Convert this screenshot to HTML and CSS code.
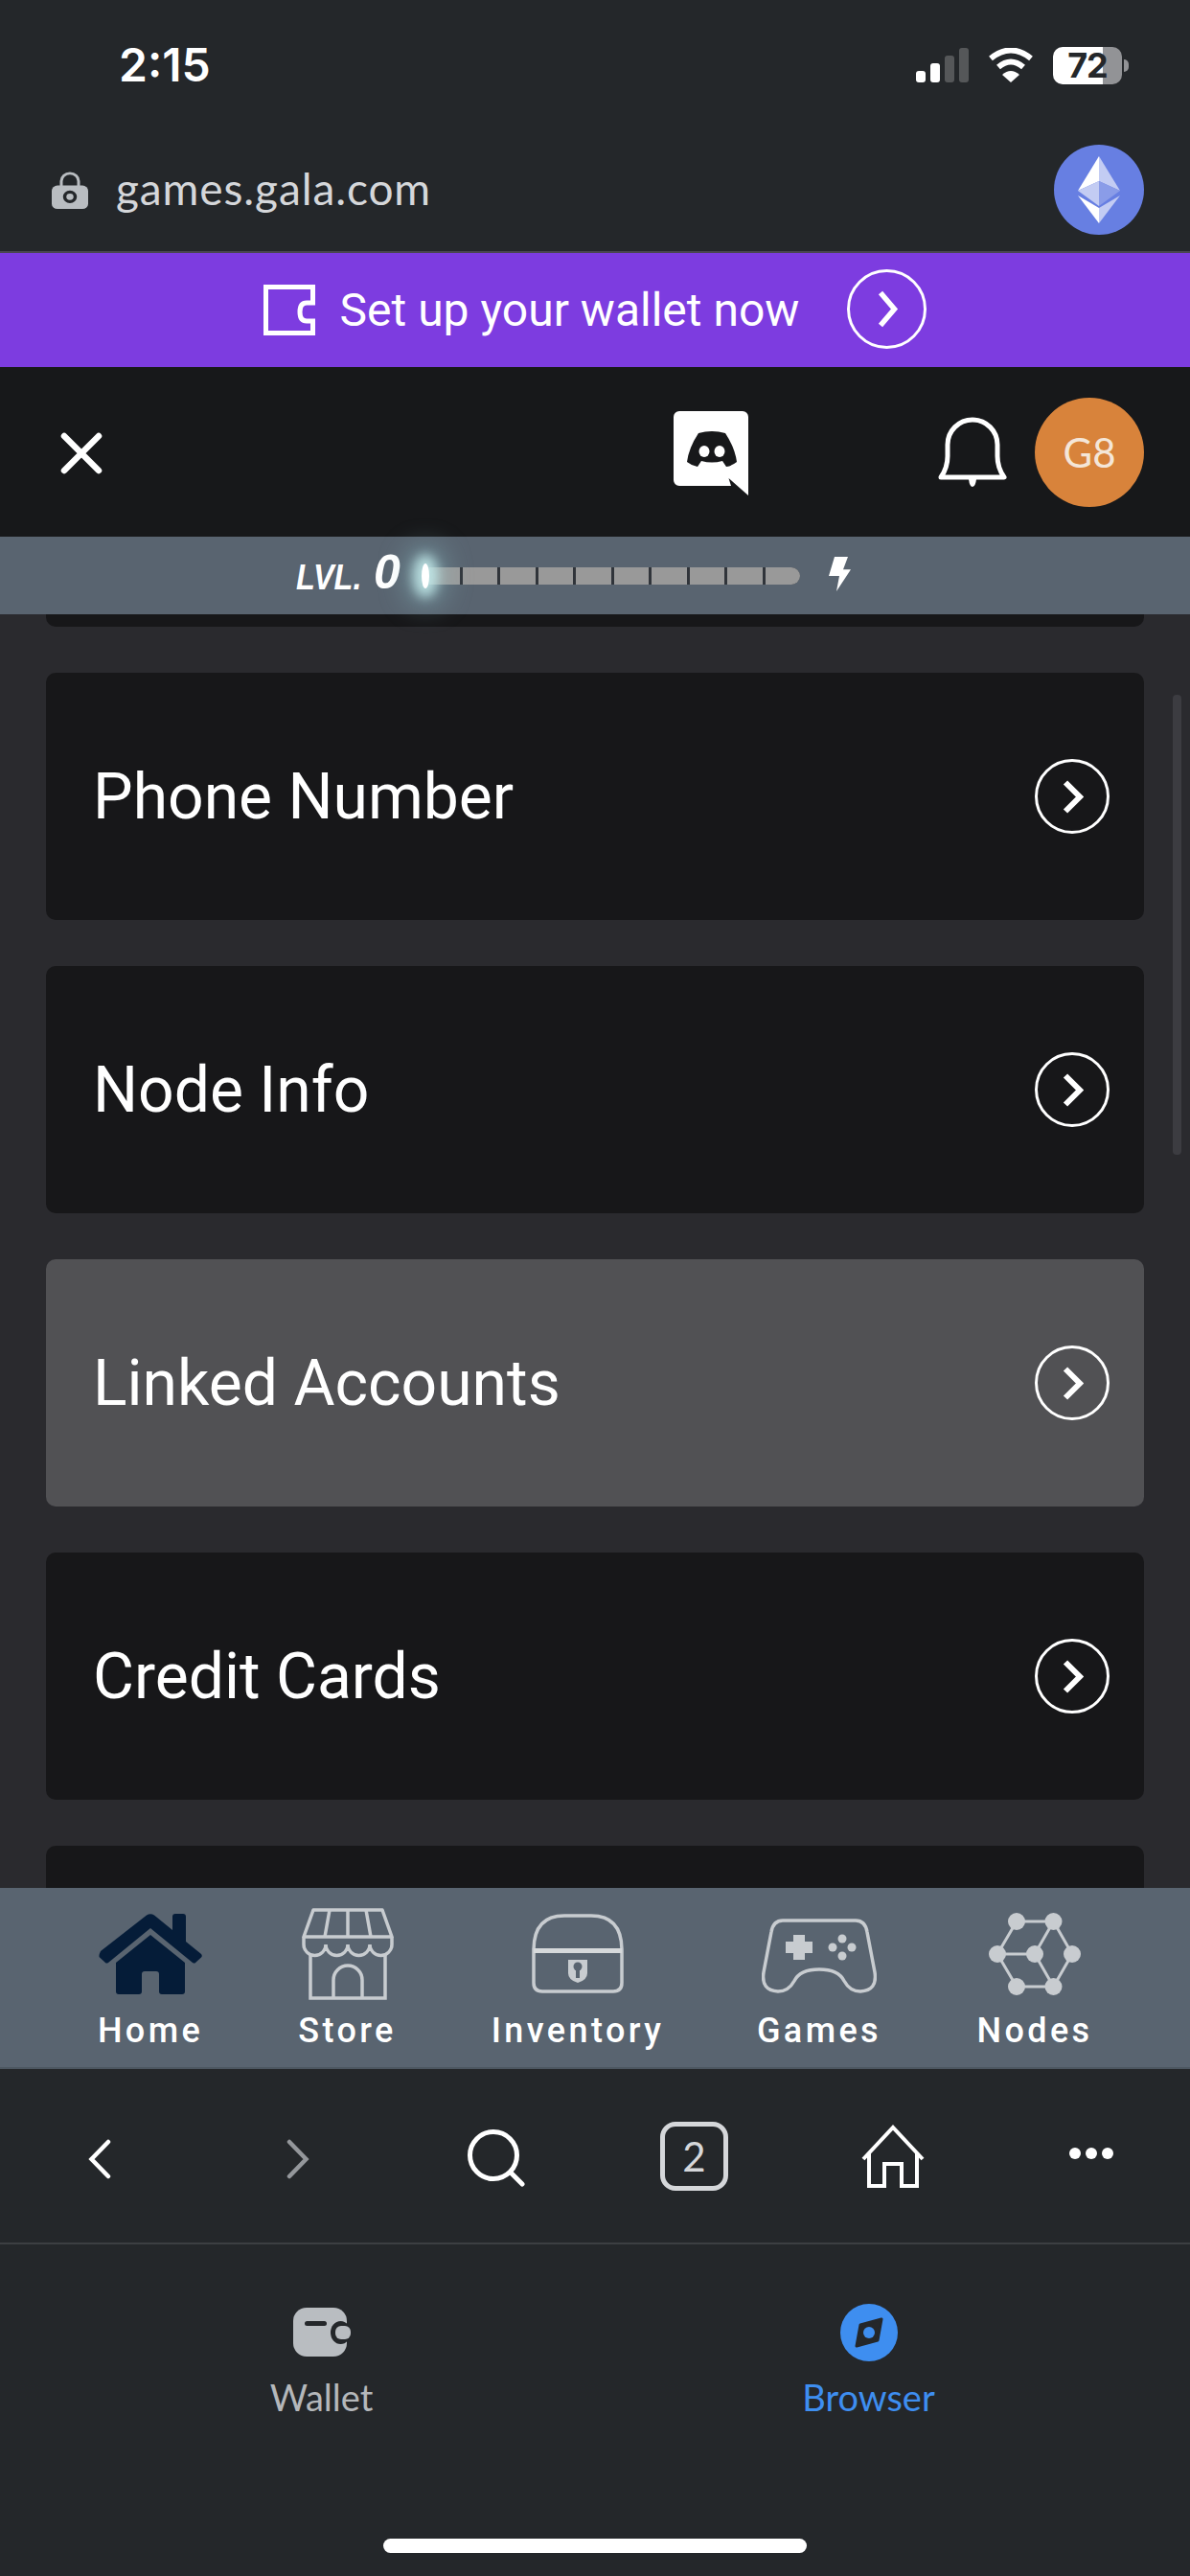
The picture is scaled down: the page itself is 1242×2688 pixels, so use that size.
FILE: index.html
```
<!DOCTYPE html>
<html lang="en">
<head>
    <meta charset="UTF-8">
    <meta name="viewport" content="width=device-width, initial-scale=1.0">
    <title>games.gala.com</title>
    <link rel="stylesheet" href="styles.css">
</head>
<body>
    <div class="screen">
        <!-- Status bar -->
        <div class="status-bar">
            <span class="clock">2:15</span>
            <div class="status-icons">
                <svg width="55" height="36" viewBox="0 0 55 36">
                    <rect x="0" y="24" width="10" height="12" rx="3" fill="#fff"/>
                    <rect x="15" y="16" width="10" height="20" rx="3" fill="#fff"/>
                    <rect x="30" y="8" width="10" height="28" rx="3" fill="#555759"/>
                    <rect x="45" y="0" width="10" height="36" rx="3" fill="#555759"/>
                </svg>
                <svg width="48" height="36" viewBox="0 0 48 36">
                    <path d="M3 11 Q24 -6 45 11" fill="none" stroke="#fff" stroke-width="6"/>
                    <path d="M11 20 Q24 9 37 20" fill="none" stroke="#fff" stroke-width="6"/>
                    <path d="M15 28 Q24 20 33 28 L24 36 Z" fill="#fff"/>
                </svg>
                <div class="battery">
                    <div class="battery-body"><span>72</span></div>
                    <div class="battery-tip"></div>
                </div>
            </div>
        </div>

        <!-- Address bar -->
        <div class="address-bar">
            <div class="address">
                <svg width="40" height="40" viewBox="0 0 40 44" preserveAspectRatio="none">
                    <path d="M11 18 V11 a9 9 0 0 1 18 0 V18" fill="none" stroke="#b9bdc1" stroke-width="3"/>
                    <rect x="1" y="16" width="38" height="27" rx="6" fill="#b9bdc1"/>
                    <circle cx="20" cy="29" r="5.5" fill="none" stroke="#24272a" stroke-width="3.5"/>
                </svg>
                <span class="url">games.gala.com</span>
            </div>
            <div class="eth-badge">
                <svg width="44" height="70" viewBox="0 0 44 70">
                    <path d="M22 0 L0 36 L22 26 Z" fill="#fff"/>
                    <path d="M22 0 L44 36 L22 26 Z" fill="#c3ccf3"/>
                    <path d="M22 26 L0 36 L22 52 Z" fill="#c3ccf3"/>
                    <path d="M22 26 L44 36 L22 52 Z" fill="#8a9ce8"/>
                    <path d="M0 41 L22 70 L22 54 Z" fill="#fff"/>
                    <path d="M44 41 L22 70 L22 54 Z" fill="#c3ccf3"/>
                </svg>
            </div>
        </div>

        <!-- Wallet banner -->
        <div class="wallet-banner">
            <svg class="banner-wallet" width="54" height="53" viewBox="0 0 54 53">
                <path d="M51.5 21 V2.5 H2.5 V50.5 H51.5 V36" fill="none" stroke="#fff" stroke-width="5"/>
                <path d="M54 19 H45 Q38 19 38 28.5 Q38 38 45 38 H54" fill="none" stroke="#fff" stroke-width="5"/>
            </svg>
            <span class="banner-text">Set up your wallet now</span>
            <span class="circle-arrow banner-arrow">
                <svg width="24" height="39" viewBox="0 0 24 39"><path d="M4 2.5 L18.5 19.5 L4 36.5" fill="none" stroke="#fff" stroke-width="5.5"/></svg>
            </span>
        </div>

        <!-- Site header -->
        <div class="site-header">
            <svg class="close-icon" width="44" height="44" viewBox="0 0 44 44">
                <path d="M4 4 L40 40 M40 4 L4 40" stroke="#fff" stroke-width="6.5" stroke-linecap="round"/>
            </svg>
            <div class="header-right">
                <svg class="discord" width="78" height="88" viewBox="0 0 78 88">
                    <path d="M6 0 H72 a6 6 0 0 1 6 6 V88 L57.5 70 L60 78 H6 a6 6 0 0 1 -6 -6 V6 a6 6 0 0 1 6 -6 Z" fill="#fff"/>
                    <path d="M26 23 Q40 19 54 23 Q64 38 66 53 Q61 57 55 58 L51 52 Q40 55 29 52 L25 58 Q19 57 14 53 Q16 38 26 23 Z" fill="#17181a"/>
                    <ellipse cx="32" cy="42" rx="5.5" ry="6" fill="#fff"/>
                    <ellipse cx="48" cy="42" rx="5.5" ry="6" fill="#fff"/>
                </svg>
                <svg class="bell" width="72" height="74" viewBox="0 0 72 74">
                    <path d="M3 63 Q10 53 10 41 V29 a26 26 0 0 1 52 0 V41 Q62 53 69 63 Z" fill="none" stroke="#fff" stroke-width="5" stroke-linejoin="round"/>
                    <path d="M32 65 Q33 73 36 73 Q39 73 40 65" fill="#fff"/>
                </svg>
                <div class="avatar">G8</div>
            </div>
        </div>

        <!-- Level bar -->
        <div class="level-bar">
            <span class="lvl-label">LVL.</span>
            <span class="lvl-num">0</span>
            <div class="xp-track">
                <span class="xp-seg"></span><span class="xp-seg"></span><span class="xp-seg"></span>
                <span class="xp-seg"></span><span class="xp-seg"></span><span class="xp-seg"></span>
                <span class="xp-seg"></span><span class="xp-seg"></span><span class="xp-seg"></span>
                <span class="xp-seg"></span>
                <div class="xp-glow"></div>
            </div>
            <svg class="bolt" width="24" height="36" viewBox="0 0 24 38" preserveAspectRatio="none">
                <path d="M7 0 H21 L16 14 H24 L9 38 L12 21 H1 Z" fill="#fff"/>
            </svg>
        </div>

        <!-- Scrolling settings list -->
        <div class="content">
            <div class="card card-cut"></div>
            <div class="card">
                <span>Phone Number</span>
                <span class="circle-arrow"><svg width="22" height="35" viewBox="0 0 22 35"><path d="M3 2.5 L18 17.5 L3 32.5" fill="none" stroke="#fff" stroke-width="6"/></svg></span>
            </div>
            <div class="card">
                <span>Node Info</span>
                <span class="circle-arrow"><svg width="22" height="35" viewBox="0 0 22 35"><path d="M3 2.5 L18 17.5 L3 32.5" fill="none" stroke="#fff" stroke-width="6"/></svg></span>
            </div>
            <div class="card card-active">
                <span>Linked Accounts</span>
                <span class="circle-arrow"><svg width="22" height="35" viewBox="0 0 22 35"><path d="M3 2.5 L18 17.5 L3 32.5" fill="none" stroke="#fff" stroke-width="6"/></svg></span>
            </div>
            <div class="card">
                <span>Credit Cards</span>
                <span class="circle-arrow"><svg width="22" height="35" viewBox="0 0 22 35"><path d="M3 2.5 L18 17.5 L3 32.5" fill="none" stroke="#fff" stroke-width="6"/></svg></span>
            </div>
            <div class="card"></div>
            <div class="scrollbar"></div>
        </div>

        <!-- Site bottom nav -->
        <div class="site-nav">
            <div class="nav-item">
                <svg width="108" height="84" viewBox="0 0 108 84">
                    <path d="M2 39 L50 1.5 Q54 -1 58 1.5 L77 17 V3 Q77 0 80 0 H88 Q91 0 91 3 V29 L107 42 Q108.5 44 107 45.5 L101 51 Q100 52 98 51 L54 15 L10 51 Q8 52 7 51 L1 45.5 Q-0.5 44 2 39 Z" fill="#051c38"/>
                    <path d="M54 22 L90 51 V81 Q90 84 87 84 H66 Q63 84 63 81 V63 Q63 60 60 60 H48 Q45 60 45 63 V81 Q45 84 42 84 H21 Q18 84 18 81 V51 Z" fill="#051c38"/>
                </svg>
                <span class="nav-label">Home</span>
            </div>
            <div class="nav-item">
                <svg width="96" height="96" viewBox="0 0 96 96">
                    <path d="M9 49 V94 H87 V49" fill="none" stroke="#c8ccd0" stroke-width="3.5"/>
                    <path d="M12 2 H84 L94 30 H2 Z" fill="none" stroke="#c8ccd0" stroke-width="3.5" stroke-linejoin="round"/>
                    <path d="M29 2 L24 30 M48 2 V30 M67 2 L72 30" stroke="#c8ccd0" stroke-width="3.5"/>
                    <path d="M2 30 V38 a11.5 11.5 0 0 0 23 0 a11.5 11.5 0 0 0 23 0 a11.5 11.5 0 0 0 23 0 a11.5 11.5 0 0 0 23 0 V30" fill="none" stroke="#c8ccd0" stroke-width="3.5"/>
                    <path d="M33 94 V75 a15 15 0 0 1 30 0 V94" fill="none" stroke="#c8ccd0" stroke-width="3.5"/>
                </svg>
                <span class="nav-label">Store</span>
            </div>
            <div class="nav-item">
                <svg width="96" height="84" viewBox="0 0 96 84">
                    <path d="M2 38 Q2 2 34 2 H62 Q94 2 94 38 V72 Q94 81 85 81 H11 Q2 81 2 72 Z" fill="none" stroke="#c8ccd0" stroke-width="3.5"/>
                    <rect x="2" y="36" width="92" height="5" fill="#d6d9db"/>
                    <path d="M38 48 H58 V62 Q58 69 48 72 Q38 69 38 62 Z" fill="#c8ccd0"/>
                    <circle cx="48" cy="55" r="4.5" fill="#596470"/>
                    <rect x="46" y="56" width="4" height="11" fill="#596470"/>
                </svg>
                <span class="nav-label">Inventory</span>
            </div>
            <div class="nav-item">
                <svg class="games-icon" width="120" height="78" viewBox="0 0 120 78">
                    <path d="M22 2 H98 Q108 2 110 14 L118 56 Q121 75 103 76 Q92 76 86 65 Q80 53 60 53 Q40 53 34 65 Q28 76 17 76 Q-1 75 2 56 L10 14 Q12 2 22 2 Z" fill="none" stroke="#c8ccd0" stroke-width="3.5"/>
                    <path d="M33 17 H45 V24 H53 V36 H45 V43 H33 V36 H25 V24 H33 Z" fill="#c8ccd0"/>
                    <circle cx="84" cy="21" r="4.5" fill="#c8ccd0"/>
                    <circle cx="74" cy="30" r="4.5" fill="#c8ccd0"/>
                    <circle cx="94" cy="30" r="4.5" fill="#c8ccd0"/>
                    <circle cx="84" cy="39" r="4.5" fill="#c8ccd0"/>
                </svg>
                <span class="nav-label">Games</span>
            </div>
            <div class="nav-item">
                <svg width="96" height="86" viewBox="0 0 96 86">
                    <path d="M29 9 H67.5 M29 77 H67.5 M9 43 H48 M29 9 L9 43 L29 77 M67.5 9 L87 43 L67.5 77 M67.5 9 L48 43 L67.5 77" fill="none" stroke="#c8ccd0" stroke-width="3"/>
                    <circle cx="29" cy="9" r="9" fill="#c8ccd0"/>
                    <circle cx="67.5" cy="9" r="9" fill="#c8ccd0"/>
                    <circle cx="9" cy="43" r="9" fill="#c8ccd0"/>
                    <circle cx="48" cy="43" r="9" fill="#c8ccd0"/>
                    <circle cx="87" cy="43" r="9" fill="#c8ccd0"/>
                    <circle cx="29" cy="77" r="9" fill="#c8ccd0"/>
                    <circle cx="67.5" cy="77" r="9" fill="#c8ccd0"/>
                </svg>
                <span class="nav-label">Nodes</span>
            </div>
        </div>

        <!-- Browser toolbar -->
        <div class="browser-toolbar">
            <svg class="tool-chevron" width="24" height="42" viewBox="0 0 24 42"><path d="M21 3 L3.5 21 L21 39" fill="none" stroke="#fff" stroke-width="4.5" stroke-linecap="round"/></svg>
            <svg class="tool-chevron" width="24" height="42" viewBox="0 0 24 42"><path d="M3 3 L20.5 21 L3 39" fill="none" stroke="#94979b" stroke-width="4.5" stroke-linecap="round"/></svg>
            <svg class="tool-search" width="60" height="60" viewBox="0 0 60 60">
                <circle cx="27" cy="27" r="24.5" fill="none" stroke="#fff" stroke-width="5"/>
                <path d="M45 45 L57 57" stroke="#fff" stroke-width="5" stroke-linecap="round"/>
            </svg>
            <div class="tab-count">2</div>
            <svg width="66" height="66" viewBox="0 0 66 66">
                <path d="M2 36 L33 3 L64 36 M8 29 V64 H24 V41 H42 V64 H58 V29" fill="none" stroke="#fff" stroke-width="4"/>
            </svg>
            <div class="more-dots"><span></span><span></span><span></span></div>
        </div>

        <!-- Wallet tabs -->
        <div class="app-tabs">
            <div class="app-tab">
                <svg width="60" height="60" viewBox="0 0 60 60">
                    <rect x="0" y="4" width="56" height="51" rx="14" fill="#b9bdc1"/>
                    <rect x="39" y="18" width="21" height="24" rx="12" fill="#24272a"/>
                    <rect x="44" y="23" width="16" height="14" rx="6" fill="#b9bdc1"/>
                    <rect x="12" y="18" width="23" height="5" rx="2.5" fill="#24272a"/>
                </svg>
                <span>Wallet</span>
            </div>
            <div class="app-tab tab-active">
                <svg width="60" height="60" viewBox="0 0 60 60">
                    <circle cx="30" cy="30" r="30" fill="#3e8ef0"/>
                    <path d="M21 22 L43 16 L39 38 L17 44 Z" fill="#24272a" stroke="#24272a" stroke-width="3" stroke-linejoin="round"/>
                    <circle cx="30" cy="30" r="6" fill="#3e8ef0"/>
                </svg>
                <span>Browser</span>
            </div>
        </div>

        <div class="home-indicator"></div>
    </div>
</body>
</html>
```

FILE: styles.css
```
* {
    box-sizing: border-box;
}
body {
    margin: 0;
    background-color: #24272a;
    font-family: Roboto, sans-serif;
}
.screen {
    width: 1242px;
    height: 2688px;
    display: flex;
    flex-direction: column;
    overflow: hidden;
}
svg {
    display: block;
    flex-shrink: 0;
}

/* status bar */
.status-bar {
    height: 122px;
    padding: 46px 64px 0 124px;
    display: flex;
    justify-content: space-between;
    background-color: #24272a;
}
.clock {
    color: #fff;
    font-family: Inter, sans-serif;
    font-size: 48px;
    font-weight: 600;
    line-height: 44px;
}
.status-icons {
    height: 44px;
    display: flex;
    align-items: center;
    gap: 20px;
}
.battery {
    display: flex;
    align-items: center;
    gap: 2px;
}
.battery-body {
    width: 72px;
    height: 39px;
    border-radius: 10px;
    background: linear-gradient(90deg, #fff 72%, #929396 72%);
    display: flex;
    align-items: center;
    justify-content: center;
    color: #24272a;
    font-family: Inter, sans-serif;
    font-size: 36px;
    font-weight: 700;
    letter-spacing: -1px;
}
.battery-tip {
    width: 5px;
    height: 13px;
    border-radius: 0 5px 5px 0;
    background-color: #929396;
}

/* address bar */
.address-bar {
    height: 142px;
    flex-shrink: 0;
    padding: 0 48px 0 53px;
    display: flex;
    align-items: flex-start;
    justify-content: space-between;
    background-color: #24272a;
    border-bottom: 2px solid #4a4650;
}
.address {
    display: flex;
    align-items: center;
    gap: 28px;
    margin-top: 56px;
}
.url {
    color: #d5d7da;
    font-family: Lato, sans-serif;
    font-size: 46px;
    letter-spacing: 0.9px;
    line-height: 44px;
    margin-top: -3px;
}
.eth-badge {
    width: 94px;
    height: 94px;
    margin-top: 29px;
    border-radius: 50%;
    background-color: #677fe2;
    display: flex;
    align-items: center;
    justify-content: center;
}

/* banner */
.wallet-banner {
    height: 119px;
    flex-shrink: 0;
    background-color: #7d3ce0;
    display: flex;
    align-items: center;
    justify-content: center;
}
.banner-wallet {
    margin-right: 26px;
}
.banner-text {
    color: #fff;
    font-size: 48px;
    margin-right: 50px;
}
.circle-arrow {
    width: 78px;
    height: 78px;
    border: 3px solid #fff;
    border-radius: 50%;
    display: flex;
    align-items: center;
    justify-content: center;
    padding-left: 2px;
    flex-shrink: 0;
}
.banner-arrow {
    width: 83px;
    height: 83px;
    margin-top: -2px;
}

/* site header */
.site-header {
    height: 177px;
    flex-shrink: 0;
    padding: 0 48px 0 63px;
    display: flex;
    align-items: center;
    justify-content: space-between;
    background-color: #17181a;
}
.close-icon {
    margin-top: 3px;
}
.header-right {
    display: flex;
    align-items: center;
}
.discord {
    margin-right: 198px;
    margin-top: 3px;
}
.bell {
    margin-right: 29px;
}
.avatar {
    width: 114px;
    height: 114px;
    border-radius: 50%;
    background-color: #d8833b;
    color: #f4e6d8;
    font-family: Lato, sans-serif;
    font-size: 42px;
    display: flex;
    align-items: center;
    justify-content: center;
}

/* level bar */
.level-bar {
    height: 81px;
    flex-shrink: 0;
    padding-left: 309px;
    display: flex;
    align-items: center;
    background-color: #596470;
    color: #fff;
    font-style: italic;
    font-weight: 700;
    position: relative;
    z-index: 2;
}
.lvl-label {
    width: 72px;
    font-family: "Liberation Sans", sans-serif;
    font-size: 36px;
    margin-top: 5px;
    white-space: nowrap;
    transform: scaleX(0.9);
    transform-origin: left center;
}
.lvl-num {
    width: 34px;
    margin-left: 9px;
    margin-top: -8px;
    font-family: "Liberation Sans", sans-serif;
    font-size: 50px;
}
.xp-track {
    width: 392px;
    height: 18px;
    margin-left: 19px;
    display: flex;
    gap: 3px;
    border-radius: 9px;
    background-color: #30343a;
    position: relative;
}
.xp-seg {
    flex: 1;
    background-color: #999;
}
.xp-seg:nth-of-type(10) {
    border-radius: 0 9px 9px 0;
}
.xp-glow {
    position: absolute;
    left: -3px;
    top: -4px;
    width: 8px;
    height: 26px;
    border-radius: 50%;
    background-color: #fff;
    box-shadow: 0 0 12px 9px rgba(200, 240, 240, 0.8), 0 0 28px 18px rgba(150, 210, 215, 0.35);
}
.bolt {
    margin-left: 29px;
    margin-top: -4px;
}

/* settings list */
.content {
    height: 1329px;
    flex-shrink: 0;
    padding: 0 48px;
    background-color: #2a2a2e;
    overflow: hidden;
    position: relative;
    display: flex;
    flex-direction: column;
    gap: 48px;
}
.card {
    height: 258px;
    flex-shrink: 0;
    padding: 0 36px 0 49px;
    border-radius: 10px;
    background-color: #171719;
    display: flex;
    align-items: center;
    justify-content: space-between;
    color: #fff;
    font-family: Roboto, sans-serif;
    font-size: 66px;
}
.card-cut {
    height: 13px;
    border-radius: 0 0 10px 10px;
}
.card-active {
    background-color: #515154;
}
.scrollbar {
    position: absolute;
    right: 9px;
    top: 84px;
    width: 9px;
    height: 480px;
    border-radius: 4px;
    background-color: #3c3c41;
}

/* site nav */
.site-nav {
    height: 189px;
    flex-shrink: 0;
    background-color: #596470;
    border-bottom: 2px solid #4c5660;
    padding: 21px 0 0 54px;
    display: grid;
    grid-template-columns: 206px 205px 276px 228px 222px;
}
.nav-item {
    display: grid;
    grid-template-rows: 96px 40px;
    row-gap: 12px;
    justify-items: center;
    align-items: center;
}
.games-icon {
    margin-top: 4px;
}
.nav-label {
    color: #fff;
    font-family: Roboto, sans-serif;
    font-size: 36px;
    font-weight: 500;
    letter-spacing: 3.4px;
    line-height: 40px;
}

/* browser toolbar */
.browser-toolbar {
    height: 183px;
    flex-shrink: 0;
    display: grid;
    grid-template-columns: repeat(6, 1fr);
    justify-items: center;
    align-items: center;
    background-color: #24272a;
    border-bottom: 2px solid #3c3f42;
}
.tool-chevron {
    margin-top: 6px;
}
.tool-search {
    margin-top: 4px;
}
.tab-count {
    width: 71px;
    height: 72px;
    border: 5px solid #d5d7da;
    border-radius: 16px;
    color: #d5d7da;
    font-family: Lato, sans-serif;
    font-size: 42px;
    display: flex;
    align-items: center;
    justify-content: center;
}
.more-dots {
    display: flex;
    gap: 5px;
    margin-top: -5px;
}
.more-dots span {
    width: 12px;
    height: 12px;
    border-radius: 50%;
    background-color: #fff;
}

/* wallet tabs */
.app-tabs {
    height: 307px;
    flex-shrink: 0;
    padding: 62px 50px 0;
    display: grid;
    grid-template-columns: 1fr 1fr;
    align-items: start;
    background-color: #24272a;
}
.app-tab {
    display: flex;
    flex-direction: column;
    align-items: center;
    gap: 15px;
    color: #b4b7ba;
    font-family: Lato, sans-serif;
    font-size: 38px;
    line-height: 44px;
}
.tab-active {
    color: #3e8ef0;
}

.home-indicator {
    width: 442px;
    height: 15px;
    margin: 0 auto;
    border-radius: 8px;
    background-color: #fff;
    flex-shrink: 0;
}
```
